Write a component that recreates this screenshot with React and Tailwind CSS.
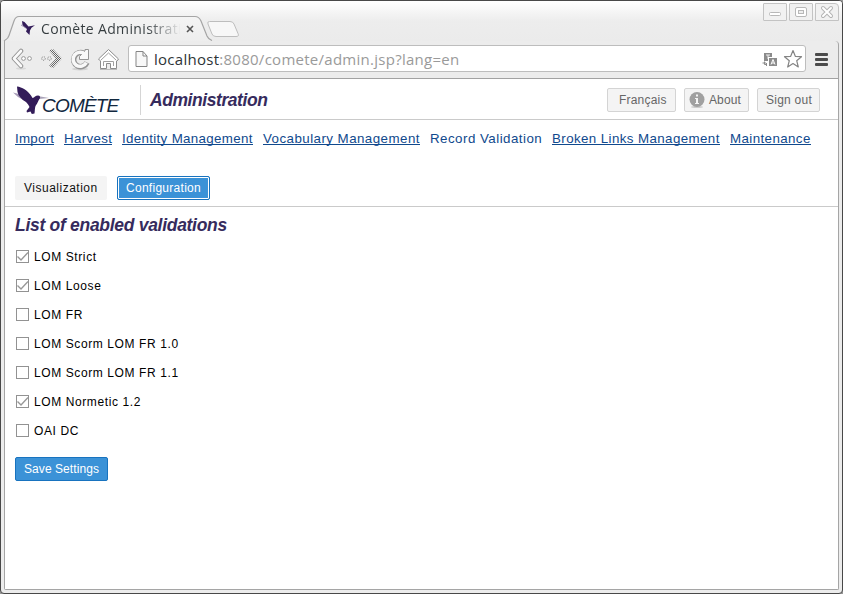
import React from 'react';

function Bird({ className }) {
  return (
    <svg viewBox="0 0 36 28" preserveAspectRatio="none" className={className}>
      <path d="M26 10.3 L36 12 L26 13Z" fill="#aaa3b8" />
      <path d="M0 6.500 L6 8 L14 16 L5 11Z" fill="#a79bb8" />
      <path d="M4 0.500 C9 1 14.500 4.500 18 9.500 L19.500 12 C21.500 11.500 22.500 9.500 25 9.500 C27 9.500 27.500 11 26.800 12.500 C25.200 14 25 17 22.500 20 C21.700 22 22 25 21.500 27.500 L18.800 28 L17.500 25.500 L14 26.500 L13.500 25 L16.500 21 C15.500 19 14.500 17.500 13 16 C8.500 13.500 5.500 10 4.500 6 Z" fill="#331c59" />
    </svg>
  );
}

function FavIcon() {
  return (
    <svg className="-mt-px shrink-0" width="15" height="17" viewBox="0 0 15 17" fill="#331c59">
      <path d="M1 1 L3.500 2 L7.500 6.500 L14 5.300 L10.500 7.700 L9 10.500 L8.500 15 L6.500 13 L5 11.500 L6 9 L4 7.500 L1.500 5Z" />
      <path d="M0 5 L5 8" stroke="#7d6c98" strokeWidth=".7" />
    </svg>
  );
}

function WindowButtons() {
  const frame = 'h-[18px] w-6 border border-[#c3c3c3] bg-[#f1f1f1]';
  return (
    <div className="mt-[2px] mr-[4px] flex gap-[2px]">
      <svg className={frame + ' rounded-[1px]'} viewBox="0 0 22 16">
        <rect x="5.500" y="8.500" width="11" height="3" rx="1" fill="#fff" stroke="#b8b8b8" />
      </svg>
      <svg className={frame + ' rounded-[1px]'} viewBox="0 0 22 16">
        <rect x="5.500" y="3.500" width="11" height="9" rx="1.500" fill="#fff" stroke="#b8b8b8" />
        <rect x="8.500" y="6.500" width="5" height="3" fill="#eee" stroke="#b8b8b8" />
      </svg>
      <svg className={frame + ' rounded-tr-[4px]'} viewBox="0 0 22 16">
        <path d="M7 4 L15 12 M15 4 L7 12" stroke="#b4b4b4" strokeWidth="4" strokeLinecap="round" />
        <path d="M7 4 L15 12 M15 4 L7 12" stroke="#fff" strokeWidth="2" strokeLinecap="round" />
      </svg>
    </div>
  );
}

function TabShapes() {
  return (
    <svg className="absolute left-0 -top-px" width="260" height="41" viewBox="0 0 260 41">
      <defs>
        <linearGradient id="tab" x2="0" y2="1">
          <stop stopColor="#f4f4f4" />
          <stop offset="1" stopColor="#ececec" />
        </linearGradient>
      </defs>
      <path d="M4 45 V42 Q4 40.500 6 39.500 Q8 38.500 9 35.500 L14 21 Q15.500 16.500 19 16.500 H195 Q199 16.500 201 21 L207 36 Q208.500 39.500 212 40.500 V46 H4Z" fill="url(#tab)" />
      <path d="M4 46 V42 Q4 40.500 6 39.500 Q8 38.500 9 35.500 L14 21 Q15.500 16.500 19 16.500 H195 Q199 16.500 201 21 L207 36 Q208.500 39.500 212 40.500" fill="none" stroke="#a5a5a5" strokeWidth="1.2" />
      <path d="M209.500 21.500 H230 Q233 21.500 234 24 L238 33.500 Q239.500 36.500 236 36.500 H216 Q213 36.500 212 34 L208 24 Q207 21.500 209.500 21.500Z" fill="#f7f7f7" stroke="#bdbdbd" />
    </svg>
  );
}

function NavIcons() {
  return (
    <svg className="ml-[11px] mt-[7px] shrink-0" width="110" height="24" viewBox="11 48 110 24">
      <defs>
        <pattern id="dots" width="2" height="2" patternUnits="userSpaceOnUse">
          <rect width="1" height="1" fill="#666" />
          <rect x="1" y="1" width="1" height="1" fill="#666" />
        </pattern>
      </defs>
      <ellipse cx="80" cy="69" rx="8" ry="1.500" fill="#d2d2d2" />
      <ellipse cx="21" cy="68.500" rx="5" ry="1" fill="#d8d8d8" />
      <g fill="none">
        <path d="M21 51 L14 58.500 L21 66" stroke="#929292" strokeWidth="4.500" strokeLinecap="round" strokeLinejoin="round" />
        <path d="M21 51 L14 58.500 L21 66" stroke="#fafafa" strokeWidth="2.600" strokeLinecap="round" strokeLinejoin="round" />
        <circle cx="23.500" cy="58.500" r="1.900" fill="#fff" stroke="#999" />
        <circle cx="29.500" cy="58.500" r="1.900" fill="#fff" stroke="#999" />
        <path d="M49 50.500 L53 49 L62 58.500 L53 68 L49 66 L56 58.500Z" fill="url(#dots)" />
        <circle cx="43.500" cy="58.500" r="1.800" stroke="#777" strokeDasharray="1 1" />
        <circle cx="49.500" cy="58.500" r="1.800" stroke="#777" strokeDasharray="1 1" />
        <path d="M84 53.500 A7 7 0 1 0 87 62.500" stroke="#959595" strokeWidth="5.500" />
        <path d="M79.500 59.500 V56.500 L85 51 V49.500 H88.500 V59.500Z" fill="#f8f8f8" stroke="#959595" strokeLinejoin="round" />
        <path d="M85 54.300 A7 7 0 1 0 86.300 62.700" stroke="#f8f8f8" strokeWidth="3.500" />
        <path d="M98.500 59 L108.500 49.500 L118.500 59 L117 61 H116.500 V68.500 H110.500 V63.500 H106.500 V68.500 H100.500 V61Z" fill="#fff" stroke="#8c8c8c" strokeLinejoin="round" />
        <path d="M101 60 L108.500 53 L116 60 M103.500 66 V61.500 H113.500 V66" stroke="#a0a0a0" />
        <path d="M100 69.500 H117" stroke="#bbb" />
      </g>
    </svg>
  );
}

function Toolbar() {
  return (
    <div className="flex h-[37px]">
      <NavIcons />
      <div className="ml-[7px] mt-[4px] flex h-[27px] w-[678px] items-center rounded-[3px] border border-[#bdbdbd] bg-white">
        <svg className="ml-[6px] shrink-0" width="13" height="16" viewBox="0 0 13 16">
          <path d="M1 .5 H8 L12 5 V15.500 H1Z M8 .5 V5 H12" fill="#f8f8f8" stroke="#858585" />
        </svg>
        <div className="ml-[6px] w-[608px] shrink-0 whitespace-nowrap font-['Open_Sans',sans-serif] text-[15px] leading-[22px] tracking-[0.27px] text-[#9a9a9a]">
          <span className="text-[#2e3436]">localhost</span>:8080/comete/admin.jsp?lang=en
        </div>
        <svg className="mt-[2px] shrink-0" width="16" height="16" viewBox="0 0 16 16">
          <rect x="2" y="1" width="8" height="8" fill="#8b8b8b" />
          <path d="M4 3 H8 M6 3 V7" stroke="#eee" />
          <rect x="6.500" y="5.500" width="9" height="9" fill="#8b8b8b" stroke="#fff" />
          <path d="M9 12.500 L11 7.500 L13 12.500 M10 11 H12" stroke="#fff" fill="none" />
          <path d="M2.500 9.500 V12.500 H5 M0.500 11 H4 M4.500 11 V14" stroke="#8b8b8b" fill="none" />
        </svg>
        <svg className="ml-[5px] mt-px shrink-0" width="20" height="20" viewBox="0 0 20 20">
          <path d="M10 1.500 L12.300 7.300 L18.500 7.700 L13.700 11.700 L15.300 18 L10 14.500 L4.700 18 L6.300 11.700 L1.500 7.700 L7.700 7.300Z" fill="#fff" stroke="#858585" strokeLinejoin="round" strokeWidth="1.200" />
        </svg>
      </div>
      <div className="ml-[9px] mt-[12px] flex flex-col gap-[2px]">
        <i className="h-[3px] w-[13px] rounded-[1px] bg-[#4b4b4b]" />
        <i className="h-[3px] w-[13px] rounded-[1px] bg-[#4b4b4b]" />
        <i className="h-[3px] w-[13px] rounded-[1px] bg-[#4b4b4b]" />
      </div>
    </div>
  );
}

const links = [
  ['Import', 'w-[39px]', 'tracking-[0.25px]'],
  ['Harvest', 'w-[48px]', 'tracking-[0.33px]'],
  ['Identity Management', 'w-[131px]', 'tracking-[0.33px]'],
  ['Vocabulary Management', 'w-[157px]', 'tracking-[0.45px]'],
  ['Record Validation', 'w-[112px]', 'tracking-[0.47px]'],
  ['Broken Links Management', 'w-[168px]', 'tracking-[0.4px]'],
  ['Maintenance', 'w-[81px]', 'tracking-[0.4px]'],
];

const validations = [
  ['LOM Strict', true],
  ['LOM Loose', true],
  ['LOM FR', false],
  ['LOM Scorm LOM FR 1.0', false],
  ['LOM Scorm LOM FR 1.1', false],
  ['LOM Normetic 1.2', true],
  ['OAI DC', false],
];

function Header() {
  const btn = 'flex h-6 items-center rounded-[2px] border border-[#d4d4d4] bg-[#f4f4f4] text-[12px] text-[#666] whitespace-nowrap';
  return (
    <header className="flex h-[41px] border-b border-[#cacaca]">
      <div className="ml-[8px] flex w-[127px] shrink-0">
        <Bird className="mt-[7px] h-7 w-9 shrink-0" />
        <span className="-ml-[7px] mt-[17px] whitespace-nowrap text-[19px] italic leading-[20px] tracking-[-0.8px] text-[#12283f]">COMÈTE</span>
      </div>
      <div className="mt-[6px] h-[30px] border-l border-[#d5d5d5]" />
      <h1 className="ml-[9px] mt-[10px] w-[457px] shrink-0 text-[17.5px] font-bold italic leading-[22px] tracking-[-0.43px] text-[#362b5d]">Administration</h1>
      <div className="mt-[9px] flex shrink-0 gap-2">
        <button className={btn + ' w-[69px] pl-[11px] tracking-[0.2px]'}>Français</button>
        <button className={btn + ' w-[65px] pl-[4px] tracking-[0.1px]'}>
          <svg width="16" height="16" viewBox="0 0 16 16" className="mr-[4px] shrink-0">
            <ellipse cx="8" cy="15" rx="6" ry="1" fill="#ccc" />
            <circle cx="8" cy="7.500" r="7.500" fill="#a0a0a0" />
            <path d="M7 2.500 h2 v2 h-2Z M6 6 h3 v5 h1 v1 h-4 v-1 h1 v-4 h-1Z" fill="#f4f4f4" />
          </svg>
          About
        </button>
        <button className={btn + ' w-[63px] pl-[8px] tracking-[0.25px]'}>Sign out</button>
      </div>
    </header>
  );
}

function Page() {
  return (
    <main className="h-[510px] w-[833px] bg-white font-['Liberation_Sans',Arial,sans-serif]">
      <Header />
      <nav className="flex h-[56px] gap-[10px] pl-[10px] pt-[10px] text-[13.33px] leading-[17px] text-[#10498d]">
        {links.map(([label, width, tracking]) => (
          <a key={label} className={'h-[15px] shrink-0 whitespace-nowrap ' + width + ' ' + tracking + (label === 'Record Validation' ? '' : ' border-b border-[#10498d]')}>{label}</a>
        ))}
      </nav>
      <div className="flex h-[31px] gap-[10px] border-b border-[#cacaca] pl-[10px] text-[12px]">
        <div className="flex h-6 w-[92px] items-center rounded-[2px] bg-[#f4f4f4] pl-[9px] tracking-[0.5px] text-[#111]">Visualization</div>
        <div className="flex h-6 w-[93px] items-center rounded-[2px] border border-[#1873bf] bg-[#3b92d7] pl-[8px] tracking-[0.28px] text-white shadow-[inset_0_0_0_1px_#fff]">Configuration</div>
      </div>
      <h2 className="ml-[10px] mt-[7px] text-[17.5px] font-bold italic leading-[22px] tracking-[-0.29px] text-[#362b5d]">List of enabled validations</h2>
      <div className="mt-[6px] pl-[11px]">
        {validations.map(([label, checked]) => (
          <label key={label} className="flex h-[29px] items-center text-[12px] tracking-[0.6px] text-black">
            <span className="mr-[5px] h-[13px] w-[13px] border border-[#929292]">
              {checked && (
                <svg width="11" height="11" viewBox="0 0 11 11" className="block">
                  <path d="M.5 5.500 L4 9 L11 1.500" fill="none" stroke="#989898" strokeWidth="1.400" />
                </svg>
              )}
            </span>
            {label}
          </label>
        ))}
      </div>
      <button className="ml-[10px] mt-[12px] flex h-6 w-[93px] items-center rounded-[2px] border border-[#1873bf] bg-[#3b92d7] pl-[8px] text-[12px] tracking-[0.07px] text-white">Save Settings</button>
    </main>
  );
}

export default function App() {
  return (
    <div className="h-[594px] w-[843px] overflow-hidden bg-[#999]">
      <div className="relative h-[594px] w-[843px] overflow-hidden rounded-[4px] border border-[#484848] bg-[#ececec]">
        <div className="relative -ml-px h-[40px] w-[843px] bg-linear-to-b from-white via-[#ededed] to-[#ebebeb]">
          <TabShapes />
          <div className="relative flex justify-between">
            <div className="flex pl-[21px] pt-[20px]">
              <FavIcon />
              <span className="ml-[5px] -mt-[3px] w-[139px] whitespace-nowrap bg-linear-to-r from-[#343b3e] from-75% to-[#ececec] bg-clip-text font-['Open_Sans',sans-serif] text-[14px] leading-[22px] tracking-[0.35px] text-transparent">Comète Administrati</span>
              <svg className="ml-[6px] mt-[4px]" width="8" height="8" viewBox="0 0 8 8"><path d="M1 1 L7 7 M7 1 L1 7" stroke="#555" strokeWidth="1.600" /></svg>
            </div>
            <WindowButtons />
          </div>
        </div>
        <div className="ml-[3px] h-[549px] w-[835px] rounded-tr-[4px] rounded-b-[2px] border-x border-b border-[#a5a5a5] bg-[#ececec]">
          <div className="-ml-[5px] h-[37px] w-[839px]">
            <Toolbar />
          </div>
          <div className="w-[833px] border-t border-[#a2a2a2]">
            <Page />
          </div>
        </div>
      </div>
    </div>
  );
}
